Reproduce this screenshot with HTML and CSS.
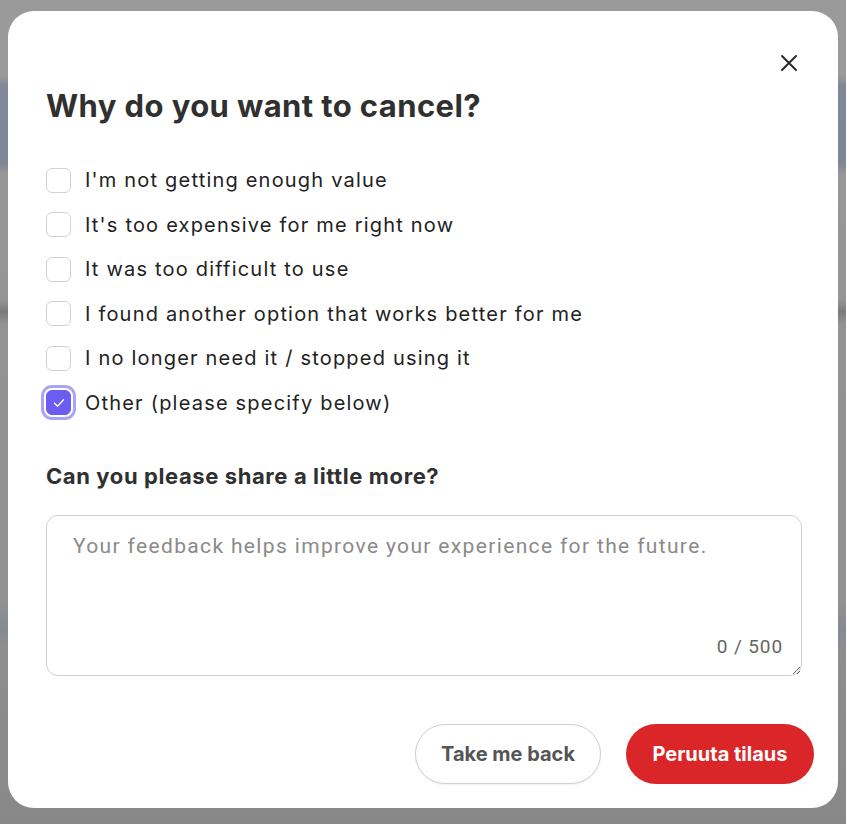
FILE: index.html
```html
<!DOCTYPE html>
<html lang="en">
<head>
<meta charset="utf-8">
<title>Cancel subscription</title>
<link rel="stylesheet" href="styles.css">
</head>
<body>
<div class="overlay">
  <div class="modal" role="dialog" aria-labelledby="title">
    <button class="close" aria-label="Close">
      <svg width="18" height="18" viewBox="0 0 18 18"><path d="M2 2 L16 16 M16 2 L2 16" stroke="#2b2b2b" stroke-width="2" stroke-linecap="round"/></svg>
    </button>
    <h1 id="title" class="title">Why do you want to cancel?</h1>
    <ul class="options">
      <li class="option"><span class="box"></span><span class="label">I'm not getting enough value</span></li>
      <li class="option"><span class="box"></span><span class="label">It's too expensive for me right now</span></li>
      <li class="option"><span class="box"></span><span class="label">It was too difficult to use</span></li>
      <li class="option"><span class="box"></span><span class="label">I found another option that works better for me</span></li>
      <li class="option"><span class="box"></span><span class="label">I no longer need it / stopped using it</span></li>
      <li class="option"><span class="box checked"><svg width="14" height="14" viewBox="0 0 14 14"><path d="M2.5 7.3 L5.6 10.2 L11.5 3.8" fill="none" stroke="#fff" stroke-width="1.3" stroke-linecap="round" stroke-linejoin="round"/></svg></span><span class="label">Other (please specify below)</span></li>
    </ul>
    <h2 class="subtitle">Can you please share a little more?</h2>
    <div class="field">
      <textarea class="feedback" placeholder="Your feedback helps improve your experience for the future."></textarea>
      <span class="counter">0 / 500</span>
    </div>
    <div class="actions">
      <button class="btn btn-secondary">Take me back</button>
      <button class="btn btn-primary">Peruuta tilaus</button>
    </div>
  </div>
</div>
</body>
</html>
```

FILE: styles.css
```css
* { box-sizing: border-box; }
html, body { margin: 0; padding: 0; }
body {
  width: 846px;
  height: 824px;
  overflow: hidden;
  font-family: Inter, "Noto Sans", sans-serif;
  background: linear-gradient(to bottom,
    #9a9a9a 0, #9a9a9a 76px,
    #808897 86px, #7f8796 164px,
    #979797 174px, #959595 300px,
    #7a7a7a 312px, #939393 324px,
    #929292 600px, #858a94 630px, #8e8e8e 650px,
    #888888 100%);
}
.overlay {
  padding: 11px 8px 16px 8px;
}
.modal {
  position: relative;
  width: 830px;
  height: 797px;
  background: #fff;
  border-radius: 26px;
  padding: 77px 36px 24px 38px;
  display: flex;
  flex-direction: column;
}
.close {
  position: absolute;
  top: 42px;
  right: 39px;
  width: 20px;
  height: 20px;
  padding: 0;
  border: 0;
  background: none;
  display: flex;
  align-items: center;
  justify-content: center;
}
.title {
  margin: 0;
  font-size: 31px;
  line-height: 36px;
  font-weight: 700;
  color: #303030;
  letter-spacing: 0.4px;
}
.options {
  list-style: none;
  margin: 42px 0 0 0;
  padding: 0;
  display: flex;
  flex-direction: column;
  gap: 16.6px;
}
.option {
  display: flex;
  align-items: center;
  gap: 14px;
  height: 28px;
}
.box {
  width: 25px;
  height: 25px;
  border: 1px solid #d2d2d2;
  border-radius: 6px;
  background: #fff;
  flex: none;
  display: flex;
  align-items: center;
  justify-content: center;
}
.box.checked {
  background: #6b5df0;
  border-color: #6b5df0;
  box-shadow: 0 0 0 2px #fff, 0 0 0 5px #a9a5f6;
}
.label {
  font-size: 20px;
  line-height: 28px;
  color: #222;
  letter-spacing: 1.2px;
}
.subtitle {
  margin: 44px 0 0 0;
  font-size: 22px;
  line-height: 30px;
  font-weight: 700;
  color: #303030;
  letter-spacing: 0.6px;
}
.field {
  position: relative;
  margin-top: 24px;
}
.feedback {
  display: block;
  width: 756px;
  height: 161px;
  border: 1px solid #d0d0d0;
  border-radius: 12px;
  padding: 16px 26px;
  font-family: Roboto, Inter, sans-serif;
  font-size: 21px;
  line-height: 28px;
  letter-spacing: 1.35px;
  color: #222;
  resize: vertical;
  outline: none;
}
.feedback::placeholder { color: #8a8a8a; }
.counter {
  position: absolute;
  right: 19px;
  top: 120px;
  font-family: Roboto, Inter, sans-serif;
  font-size: 19px;
  line-height: 24px;
  letter-spacing: 0.9px;
  color: #666;
}
.actions {
  margin-top: 48px;
  margin-right: -12px;
  display: flex;
  justify-content: flex-end;
  gap: 25px;
}
.btn {
  height: 60px;
  border-radius: 30px;
  font-family: Inter, sans-serif;
  font-size: 20px;
  font-weight: 700;
  letter-spacing: 0;
  padding: 0 20px;
  cursor: pointer;
}
.btn-secondary {
  width: 186px;
  background: #fff;
  border: 1px solid #cfcfcf;
  color: #555;
  box-shadow: 0 1px 2px rgba(0,0,0,0.06);
}
.btn-primary {
  width: 188px;
  background: #da2628;
  border: 0;
  color: #fff;
}
```
